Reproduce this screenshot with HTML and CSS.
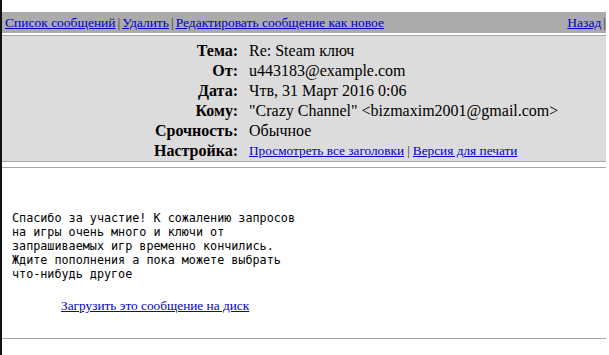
FILE: index.html
```html
<!DOCTYPE html>
<html lang="ru">
<head>
    <meta charset="UTF-8">
    <title>Re: Steam ключ</title>
    <link rel="stylesheet" href="styles.css">
</head>
<body>

<div class="page">
    <div class="toolbar">
        <div class="toolbar-left">
            <a href="#">Список сообщений</a><span class="sep">|</span><a href="#">Удалить</a><span class="sep">|</span><a href="#">Редактировать сообщение как новое</a>
        </div>
        <div class="toolbar-right">
            <a href="#">Назад</a><span class="sep">|</span>
        </div>
    </div>

    <div class="headers">
        <div class="hdr-label">Тема:</div>
        <div class="hdr-value">Re: Steam ключ</div>
        <div class="hdr-label">От:</div>
        <div class="hdr-value">u443183@example.com</div>
        <div class="hdr-label">Дата:</div>
        <div class="hdr-value">Чтв, 31 Март 2016 0:06</div>
        <div class="hdr-label">Кому:</div>
        <div class="hdr-value">"Crazy Channel" &lt;bizmaxim2001@gmail.com&gt;</div>
        <div class="hdr-label">Срочность:</div>
        <div class="hdr-value">Обычное</div>
        <div class="hdr-label">Настройка:</div>
        <div class="hdr-value small"><a href="#">Просмотреть все заголовки</a><span class="sep">|</span><a href="#">Версия для печати</a></div>
    </div>

    <div class="message">
<pre class="body-text">Спасибо за участие! К сожалению запросов
на игры очень много и ключи от
запрашиваемых игр временно кончились.
Ждите пополнения а пока можете выбрать
что-нибудь другое</pre>
        <div class="download">
            <a href="#">Загрузить это сообщение на диск</a>
        </div>
    </div>
</div>

</body>
</html>
```

FILE: styles.css
```css
body {
    margin: 0;
    background: #fff;
    font-family: "Liberation Serif", "Times New Roman", serif;
    color: #000;
}
a {
    color: #0000cc;
}
.page {
    border-left: 2px solid #111;
    min-height: 355px;
    box-sizing: border-box;
    padding-top: 12px;
    width: 606px;
}
.toolbar {
    display: flex;
    justify-content: space-between;
    align-items: center;
    background: #ababab;
    height: 21px;
    padding: 0 0 0 3px;
    font-size: 13.5px;
}
.sep {
    color: #333;
    padding: 0 2px;
}
.toolbar-right .sep {
    padding-right: 0;
}
.headers {
    margin-top: 2px;
    background: #dcdcdc;
    border-top: 1px solid #a6a6a6;
    border-bottom: 1px solid #a6a6a6;
    display: grid;
    grid-template-columns: 236px 1fr;
    column-gap: 11px;
    padding: 5px 0 0;
    font-size: 16px;
}
.hdr-label,
.hdr-value {
    height: 20px;
    line-height: 20px;
}
.hdr-label {
    text-align: right;
    font-weight: bold;
}
.hdr-value.small {
    font-size: 13.3px;
}
.hdr-value.small .sep {
    padding: 0 3px;
}
.message {
    margin-top: 5px;
    border-top: 1px solid #a6a6a6;
    border-bottom: 1px solid #a6a6a6;
    height: 170px;
}
.body-text {
    font-family: "DejaVu Sans Mono", monospace;
    font-size: 11.75px;
    line-height: 14px;
    margin: 43px 0 0 10px;
}
.download {
    margin: 17px 0 0 59px;
    font-size: 13.3px;
}
```
